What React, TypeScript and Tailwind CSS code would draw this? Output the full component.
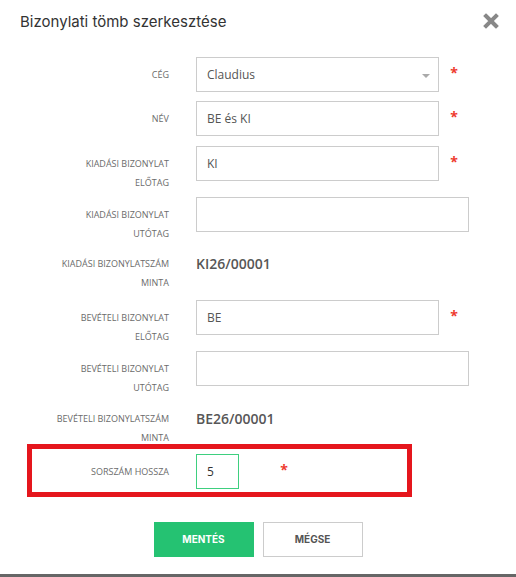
import React from "react";

type Row =
  | { kind: "input"; label: string[]; value: string; required: boolean; select?: boolean; h: string }
  | { kind: "value"; label: string[]; value: string; h: string };

const rows: Row[] = [
  { kind: "input", label: ["CÉG"], value: "Claudius", required: true, select: true, h: "h-[44px]" },
  { kind: "input", label: ["NÉV"], value: "BE és KI", required: true, h: "h-[45px]" },
  { kind: "input", label: ["KIADÁSI BIZONYLAT", "ELŐTAG"], value: "KI", required: true, h: "h-[51px]" },
  { kind: "input", label: ["KIADÁSI BIZONYLAT", "UTÓTAG"], value: "", required: false, h: "h-[49px]" },
  { kind: "value", label: ["KIADÁSI BIZONYLATSZÁM", "MINTA"], value: "KI26/00001", h: "h-[54px]" },
  { kind: "input", label: ["BEVÉTELI BIZONYLAT", "ELŐTAG"], value: "BE", required: true, h: "h-[51px]" },
  { kind: "input", label: ["BEVÉTELI BIZONYLAT", "UTÓTAG"], value: "", required: false, h: "h-[50px]" },
  { kind: "value", label: ["BEVÉTELI BIZONYLATSZÁM", "MINTA"], value: "BE26/00001", h: "h-[43px]" },
];

function Label({ lines, width = "w-[196px]" }: { lines: string[]; width?: string }) {
  return (
    <div className={`${width} shrink-0 pr-[27px] pt-2 text-right text-[9px] leading-[19px] text-[#6b6b6b]`}>
      {lines.map((l) => (
        <div key={l}>{l}</div>
      ))}
    </div>
  );
}

function Star() {
  return (
    <div className="w-[30px] shrink-0 pt-[9px] text-center text-[14px] font-bold leading-[14px] text-[#ee3b30]">
      *
    </div>
  );
}

function FormRow({ row }: { row: Row }) {
  if (row.kind === "value") {
    return (
      <div className={`flex ${row.h}`}>
        <Label lines={row.label} />
        <div className="pt-2 text-[14px] font-semibold leading-[19px] text-[#575757]">{row.value}</div>
      </div>
    );
  }
  return (
    <div className={`flex ${row.h}`}>
      <Label lines={row.label} />
      <div
        className={`flex h-[35px] ${row.required ? "w-[243px]" : "w-[273px]"} items-center justify-between border border-[#ccc] pl-[10px] pr-2 text-[12px] text-[#555]`}
      >
        <span>{row.value}</span>
        {row.select && (
          <span className="mt-[3px] h-0 w-0 border-x-[4px] border-t-[4px] border-x-transparent border-t-[#aaa]" />
        )}
      </div>
      {row.required && <Star />}
    </div>
  );
}

export default function App() {
  return (
    <div
      className="h-[577px] w-[516px] overflow-hidden border-b-[3px] border-[#666] bg-white"
      style={{ fontFamily: '"Open Sans", sans-serif' }}
    >
      <div className="flex items-center justify-between pl-[20px] pr-[17px] pt-[12px]">
        <h1 className="text-[15px] leading-[20px] text-[#333]" style={{ fontFamily: "Inter, sans-serif" }}>
          Bizonylati tömb szerkesztése
        </h1>
        <svg width="16" height="16" viewBox="0 0 16 16" className="mt-[-2px]">
          <path d="M3 3 L13 13 M13 3 L3 13" stroke="#888" strokeWidth="4" strokeLinecap="square" />
        </svg>
      </div>

      <div className="mt-[25px]">
        {rows.map((r, i) => (
          <FormRow key={i} row={r} />
        ))}

        <div className="ml-[27px] flex h-[53px] w-[385px] border-[5px] border-[#e5161d] pt-[5px]">
          <Label lines={["SORSZÁM HOSSZA"]} width="w-[164px]" />
          <div className="flex h-[35px] w-[43px] items-center border border-[#3ecf7f] pl-[10px] text-[12px] text-[#333]">
            5
          </div>
          <div className="ml-[30px]">
            <Star />
          </div>
        </div>
      </div>

      <div className="mt-[25px] flex justify-center gap-[9px]" style={{ fontFamily: "Inter, sans-serif" }}>
        <button className="h-[35px] w-[100px] bg-[#25c272] text-[10px] font-bold text-white">MENTÉS</button>
        <button className="h-[35px] w-[100px] border border-[#ccc] bg-white text-[10px] font-bold text-[#555]">
          MÉGSE
        </button>
      </div>
    </div>
  );
}
